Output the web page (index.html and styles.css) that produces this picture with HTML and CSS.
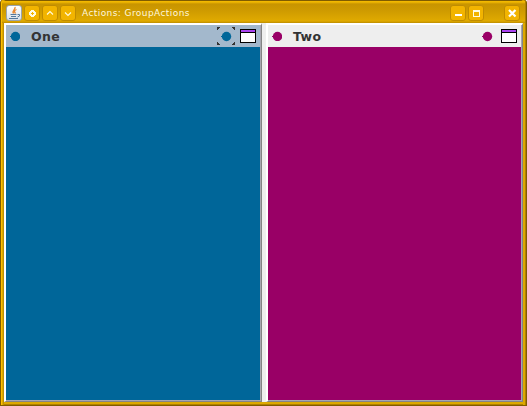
FILE: index.html
```html
<!DOCTYPE html>
<html lang="en">
<head>
<meta charset="utf-8">
<title>Actions: GroupActions</title>
<link rel="stylesheet" href="styles.css">
</head>
<body>
<div class="window">
  <header class="titlebar">
    <div class="btn java">
      <svg width="14" height="14" viewBox="0 0 14 14" fill="none">
        <path d="M8 1C9 3.500 4.500 4 6.500 7.500M9.500 3.500C7 4.500 7 5.500 8.500 7.500" stroke="#e8842c" stroke-width="1.300"/>
        <path d="M3.500 8.500h6M4 10.500h5M2 12.500h9M10.500 8.500h2v1.500l-2 1" stroke="#54789c"/>
      </svg>
    </div>
    <div class="btn"><svg width="14" height="14" shape-rendering="crispEdges"><path fill="#fffbe4" fill-rule="evenodd" d="M6 4h3v1h1v1h1v3h-1v1H9v1H6v-1H5V9H4V6h1V5h1zM7 6v1H6v1h1v1h1V8h1V7H8V6z"/></svg></div>
    <div class="btn"><svg width="14" height="14" fill="none" stroke="#fffbe0" stroke-width="1.100"><path d="M4 8.500L7 5.500L10 8.500"/></svg></div>
    <div class="btn"><svg width="14" height="14" fill="none" stroke="#fffbe0" stroke-width="1.100"><path d="M4 6.500L7 9.500L10 6.500"/></svg></div>
    <h1 class="title">Actions: GroupActions</h1>
    <div class="btn"><svg width="14" height="14"><path fill="#fff" d="M4 8h7v2H4z"/></svg></div>
    <div class="btn"><svg width="14" height="14" shape-rendering="crispEdges"><path fill="#fffbe4" fill-rule="evenodd" d="M4 4h7v7H4zM5 6v4h5V6z"/></svg></div>
    <div class="btn close"><svg width="14" height="14"><path d="M4 4L10.500 10.500M10.500 4L4 10.500" stroke="#fff" stroke-width="2.200"/></svg></div>
  </header>
  <main class="split">
    <section class="pane">
      <div class="bar active">
        <svg class="dot blue" width="10" height="10" viewBox="0 0 10 10"><path d="M0 5h2v1H0z"/><circle cx="5.500" cy="5.500" r="4.700"/></svg>
        <h2 class="name">One</h2>
        <svg class="focus blue" width="18" height="18" viewBox="0 0 18 18"><path d="M4 9h2v1H4z"/><circle cx="9.500" cy="9.500" r="4.700"/><path fill="#333" shape-rendering="crispEdges" d="M0 0h3v1H2v1H1v1H0zM15 0h3v3h-1V2h-1V1h-1zM0 15h1v1h1v1h1v1H0zM17 15h1v3h-3v-1h1v-1h1z"/></svg>
        <svg class="frame" width="16" height="14" shape-rendering="crispEdges"><path d="M0 0h16v14H0z"/><path fill="#aa44f0" d="M1 1h14v2H1z"/><path fill="#fff" d="M1 4h14v9H1z"/></svg>
      </div>
      <div class="body blue-body"></div>
    </section>
    <section class="pane">
      <div class="bar">
        <svg class="dot pink" width="10" height="10" viewBox="0 0 10 10"><path d="M0 5h2v1H0z"/><circle cx="5.500" cy="5.500" r="4.700"/></svg>
        <h2 class="name">Two</h2>
        <svg class="focus pink" width="18" height="18" viewBox="0 0 18 18"><path d="M4 9h2v1H4z"/><circle cx="9.500" cy="9.500" r="4.700"/></svg>
        <svg class="frame" width="16" height="14" shape-rendering="crispEdges"><path d="M0 0h16v14H0z"/><path fill="#aa44f0" d="M1 1h14v2H1z"/><path fill="#fff" d="M1 4h14v9H1z"/></svg>
      </div>
      <div class="body pink-body"></div>
    </section>
  </main>
</div>
</body>
</html>
```
FILE: styles.css
```css
* { box-sizing: border-box; }
body { margin: 0; background: #fff; overflow: hidden; }
h1, h2 { margin: 0; }
svg { display: block; flex: none; }
.window {
  width: 527px;
  height: 406px;
  display: flex;
  flex-direction: column;
  padding: 1px 3px 3px;
  border: 1px solid #805c00;
  border-top: 0;
  border-radius: 3px 3px 0 0;
  background: #dca800;
  box-shadow: inset 1px 0 #ffc000, inset 2px 0 #dda900, inset 3px 0 #c09000, inset -1px 0 #b08000, inset -3px 0 #dda900, inset 0 1px #805c00, inset 0 -1px #b08000, inset 0 -2px #dda900;
}
.titlebar {
  height: 22px;
  flex: none;
  display: flex;
  align-items: center;
  gap: 2px;
  padding: 2px 4px 0;
  margin: 0 -2px;
  background: linear-gradient(#f2b800 0, #f2b800 1px, #c89400 3px, #cf9b00 10px, #e0aa00 20px, #bd8c00 22px);
}
.btn {
  width: 16px;
  height: 16px;
  flex: none;
  border: 1px solid #c08c00;
  border-radius: 3px;
  background: #f2b400;
}
.java { background: linear-gradient(#fff, #d8dfe8); border-color: #9aa4ae; }
.title {
  flex: 1;
  padding-left: 4px;
  font: 9px/16px "DejaVu Sans", sans-serif;
  letter-spacing: .42px;
  color: #fff8dc;
  white-space: nowrap;
}
.close { margin-left: 18px; margin-right: 1px; }
.split {
  flex: 1;
  display: grid;
  grid-template-columns: 258px 257px;
  gap: 4px;
  background: #eee;
}
.pane {
  display: flex;
  flex-direction: column;
  border: 2px solid;
  border-color: #fff #848484 #848484 #fff;
  box-shadow: inset -1px -1px #a6a6b0;
  border-right-width: 1px;
  border-bottom-width: 1px;
  padding: 0 1px 1px 0;
}
.bar {
  height: 22px;
  flex: none;
  display: flex;
  align-items: center;
  padding: 0 4px;
  background: #eee;
}
.active { background: #a3b8cc; }
.name {
  flex: 1;
  margin-left: 11px;
  padding-top: 1px;
  font: bold 12.500px/22px "DejaVu Sans", sans-serif;
  letter-spacing: .4px;
  color: #333;
}
.focus { margin-right: 5px; }
.blue { fill: #006699; }
.pink { fill: #990066; }
.body { flex: 1; }
.blue-body { background: #006699; }
.pink-body { background: #990066; }
```
